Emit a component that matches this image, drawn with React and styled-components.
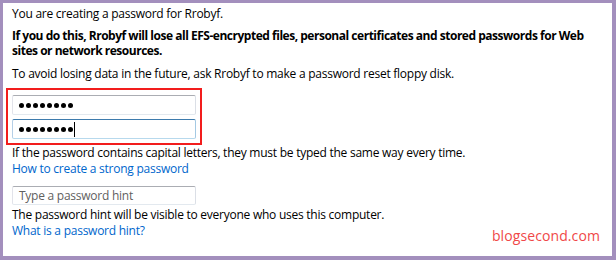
import React from 'react';
import styled, { createGlobalStyle } from 'styled-components';

const GlobalStyle = createGlobalStyle`
  html, body {
    margin: 0;
    padding: 0;
    background: #ffffff;
  }
  body {
    font-family: "Open Sans", "Noto Sans", "DejaVu Sans", sans-serif;
    font-size: 12px;
    color: #000;
  }
`;

const Frame = styled.div`
  box-sizing: border-box;
  width: 616px;
  height: 260px;
  border-style: solid;
  border-color: #a38fbd;
  border-width: 3px 4px 4px 3px;
  background: #fff;
  padding: 3px 0 0 9px;
  display: flex;
  flex-direction: column;
  position: relative;
`;

const Text = styled.p`
  margin: ${(p) => p.$mt || 0}px 0 0 0;
  line-height: 15px;
  font-weight: ${(p) => (p.$bold ? 700 : 400)};
  letter-spacing: ${(p) => (p.$bold ? '-0.48px' : '-0.25px')};
  white-space: nowrap;
`;

const Link = styled.a`
  display: block;
  color: #0066cc;
  line-height: 15px;
  text-decoration: none;
  letter-spacing: -0.25px;
  margin-top: 1px;
  cursor: pointer;
`;

const Highlight = styled.div`
  box-sizing: border-box;
  width: 196px;
  margin: 7px 0 0 -6px;
  border: 2px solid #f21d1d;
  padding: 5px 4px 4px 4px;
  display: flex;
  flex-direction: column;
  gap: 4px;
`;

const Field = styled.div`
  box-sizing: border-box;
  width: ${(p) => p.$w || 184}px;
  height: ${(p) => p.$h || 20}px;
  border: 1px solid;
  border-color: ${(p) =>
    p.$focused ? '#3d7bad #a4c9e3 #b7d9ed #b5cfe7' : '#abadb3 #dbdfe6 #e3e9ef #e2e3ea'};
  border-radius: 2px;
  background: #fff;
  display: flex;
  align-items: center;
  padding-left: 6px;
  margin-top: ${(p) => p.$mt || 0}px;
  color: ${(p) => (p.$placeholder ? '#5f5f5f' : '#000')};
  letter-spacing: -0.25px;
`;

const Dot = styled.span`
  width: 5px;
  height: 5px;
  border-radius: 50%;
  background: #000;
  margin-right: 2px;
`;

const Caret = styled.span`
  display: inline-block;
  width: 1px;
  height: 15px;
  background: #000;
  margin-left: -1px;
`;

const Watermark = styled.span`
  position: absolute;
  right: 12px;
  bottom: 11px;
  color: #f04848;
  font-size: 14px;
  letter-spacing: 0.1px;
`;

const Password = ({ focused }) => (
  <Field $focused={focused}>
    {Array.from({ length: 8 }).map((_, i) => (
      <Dot key={i} />
    ))}
    {focused && <Caret />}
  </Field>
);

export default function App() {
  return (
    <>
      <GlobalStyle />
      <Frame>
        <Text>You are creating a password for Rrobyf.</Text>
        <Text $bold $mt={7}>
          If you do this, Rrobyf will lose all EFS-encrypted files, personal certificates and stored passwords for Web
          <br />
          sites or network resources.
        </Text>
        <Text $mt={8}>To avoid losing data in the future, ask Rrobyf to make a password reset floppy disk.</Text>
        <Highlight>
          <Password />
          <Password focused />
        </Highlight>
        <Text>If the password contains capital letters, they must be typed the same way every time.</Text>
        <Link>How to create a strong password</Link>
        <Field $placeholder $mt={10} $h={19}>Type a password hint</Field>
        <Text $mt={2}>The password hint will be visible to everyone who uses this computer.</Text>
        <Link>What is a password hint?</Link>
        <Watermark>blogsecond.com</Watermark>
      </Frame>
    </>
  );
}
